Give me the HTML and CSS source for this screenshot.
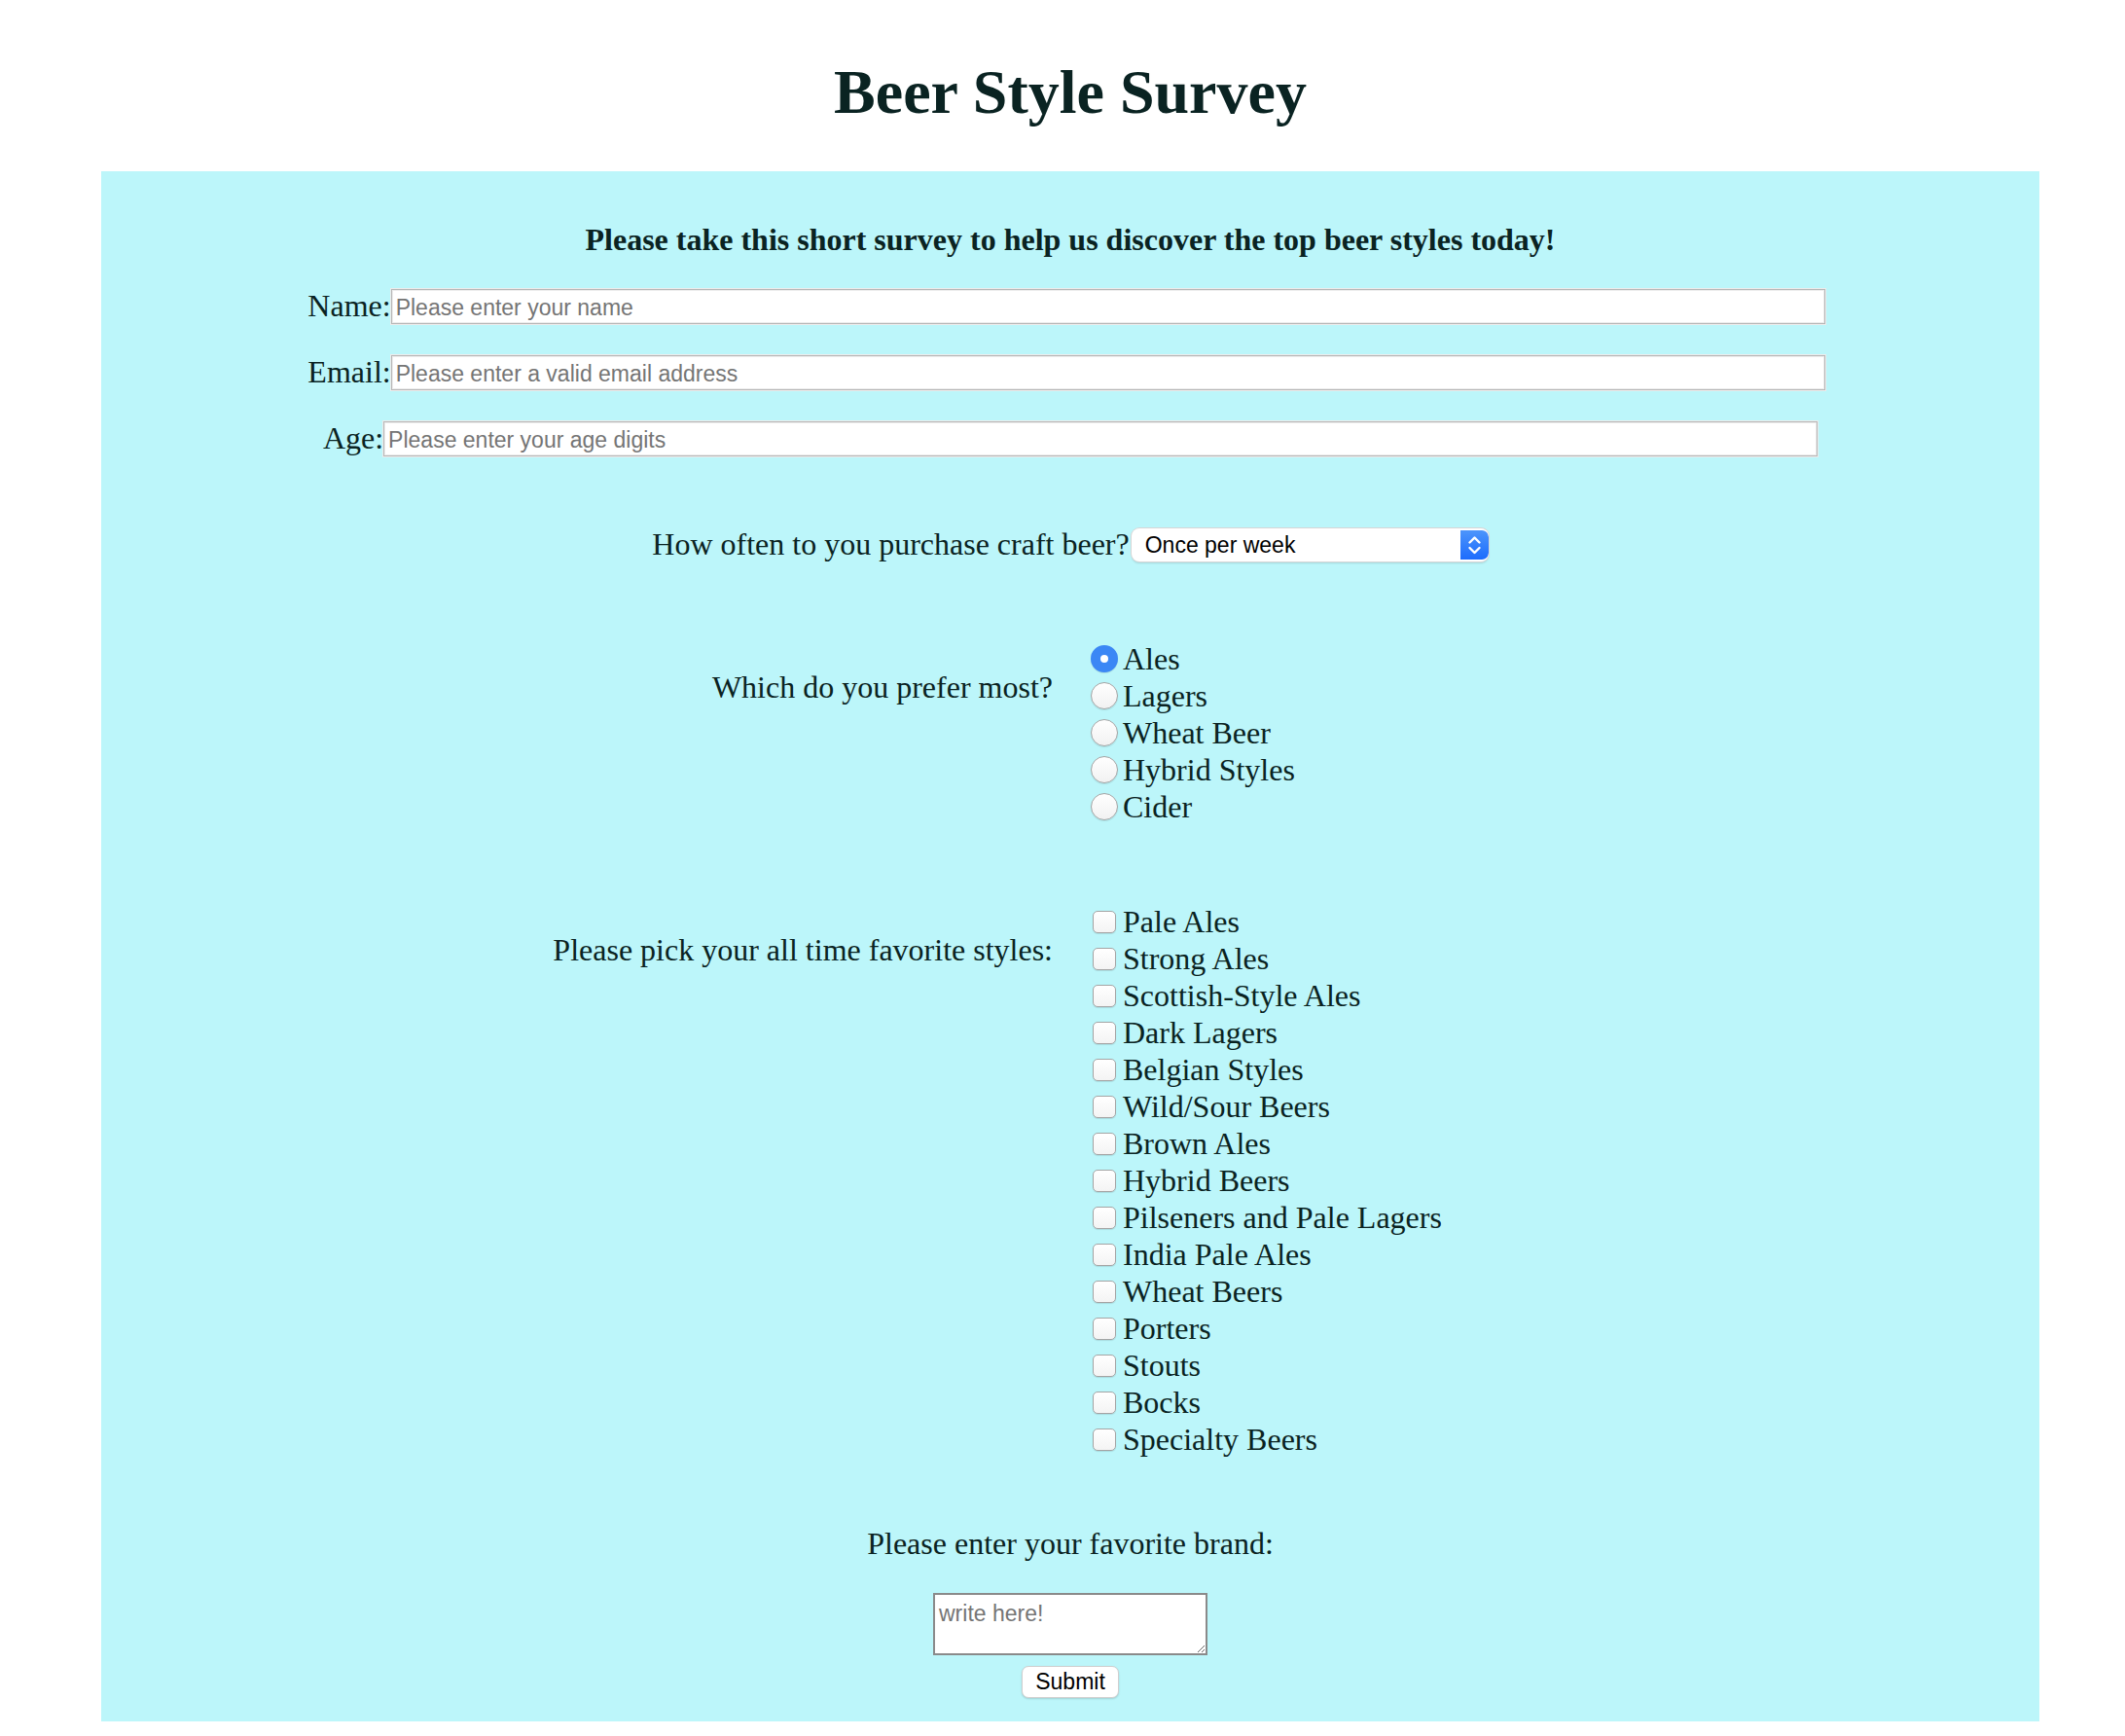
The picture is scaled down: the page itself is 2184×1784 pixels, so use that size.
FILE: index.html
```html
<!DOCTYPE html>
<html lang="en">
<head>
<meta charset="utf-8">
<title>Beer Style Survey</title>
<link rel="stylesheet" href="styles.css">
</head>
<body>
<h1 class="title">Beer Style Survey</h1>
<form class="survey">
  <p class="intro">Please take this short survey to help us discover the top beer styles today!</p>
  <div class="fields">
    <div class="field field-wide"><label class="field-label" for="name">Name:</label><input class="text-input" id="name" type="text" placeholder="Please enter your name"></div>
    <div class="field field-wide"><label class="field-label" for="email">Email:</label><input class="text-input" id="email" type="email" placeholder="Please enter a valid email address"></div>
    <div class="field"><label class="field-label" for="age">Age:</label><input class="text-input" id="age" type="text" placeholder="Please enter your age digits"></div>
  </div>
  <div class="select-row">
    <label class="field-label" for="often">How often to you purchase craft beer?</label>
    <div class="select-wrap">
      <select class="select" id="often">
        <option>Once per week</option>
        <option>Twice per week</option>
        <option>Once per month</option>
      </select>
      <span class="select-btn"><svg width="29" height="30" viewBox="0 0 29 30"><path d="M9.5 12.5 L14.5 7.5 L19.5 12.5" fill="none" stroke="#fff" stroke-width="2.4" stroke-linecap="round" stroke-linejoin="round"/><path d="M9.5 18 L14.5 23 L19.5 18" fill="none" stroke="#fff" stroke-width="2.4" stroke-linecap="round" stroke-linejoin="round"/></svg></span>
    </div>
  </div>
  <div class="question">
    <div class="q-label">Which do you prefer most?</div>
    <div class="options">
      <label class="option"><input class="radio" type="radio" name="pref" checked>Ales</label>
      <label class="option"><input class="radio" type="radio" name="pref">Lagers</label>
      <label class="option"><input class="radio" type="radio" name="pref">Wheat Beer</label>
      <label class="option"><input class="radio" type="radio" name="pref">Hybrid Styles</label>
      <label class="option"><input class="radio" type="radio" name="pref">Cider</label>
    </div>
  </div>
  <div class="question">
    <div class="q-label">Please pick your all time favorite styles:</div>
    <div class="options">
      <label class="option"><input class="check" type="checkbox">Pale Ales</label>
      <label class="option"><input class="check" type="checkbox">Strong Ales</label>
      <label class="option"><input class="check" type="checkbox">Scottish-Style Ales</label>
      <label class="option"><input class="check" type="checkbox">Dark Lagers</label>
      <label class="option"><input class="check" type="checkbox">Belgian Styles</label>
      <label class="option"><input class="check" type="checkbox">Wild/Sour Beers</label>
      <label class="option"><input class="check" type="checkbox">Brown Ales</label>
      <label class="option"><input class="check" type="checkbox">Hybrid Beers</label>
      <label class="option"><input class="check" type="checkbox">Pilseners and Pale Lagers</label>
      <label class="option"><input class="check" type="checkbox">India Pale Ales</label>
      <label class="option"><input class="check" type="checkbox">Wheat Beers</label>
      <label class="option"><input class="check" type="checkbox">Porters</label>
      <label class="option"><input class="check" type="checkbox">Stouts</label>
      <label class="option"><input class="check" type="checkbox">Bocks</label>
      <label class="option"><input class="check" type="checkbox">Specialty Beers</label>
    </div>
  </div>
  <p class="brand-label">Please enter your favorite brand:</p>
  <textarea class="brand" placeholder="write here!"></textarea>
  <button class="submit" type="submit">Submit</button>
</form>
</body>
</html>
```
FILE: styles.css
```css
html, body {
  background: #ffffff;
}
body {
  margin: 0 0 0 16px;
  font-family: "Liberation Serif", "Times New Roman", serif;
  font-size: 32px;
  color: #0a2322;
}
.title {
  margin: 58px 0 44px;
  font-size: 64px;
  line-height: 74px;
  font-weight: bold;
  text-align: center;
}
.survey {
  margin: 0 88px;
  padding: 52px 0 24px;
  background: #bcf6fa;
  display: flex;
  flex-direction: column;
  align-items: stretch;
}
.intro {
  margin: 0 0 31px;
  font-weight: bold;
  line-height: 37px;
  text-align: center;
}
.fields {
  display: flex;
  flex-direction: column;
  gap: 31px;
  margin-bottom: 72px;
}
.field {
  display: flex;
  justify-content: center;
  align-items: center;
  height: 37px;
}
.field-wide {
  padding-right: 8px;
}
.field-label {
  line-height: 37px;
}
.text-input {
  box-sizing: border-box;
  width: 1474px;
  height: 36px;
  margin: 0;
  padding: 3px 4px 0;
  font-family: "Liberation Sans", Arial, sans-serif;
  font-size: 23px;
  color: #000;
  background: #fff;
  border: 1px solid #b8b8b8;
  box-shadow: 0 0 0 1px #ececec, inset 0 0 0 1px #ececec;
  outline: none;
}
.text-input::placeholder {
  color: #757575;
}
.select-row {
  display: flex;
  justify-content: center;
  align-items: center;
  gap: 2px;
  height: 37px;
}
.select-wrap {
  display: flex;
  box-sizing: border-box;
  width: 367px;
  height: 34px;
  background: #fff;
  border-radius: 8px;
  box-shadow: 0 0 0 1px #d6d6d6, 0 2px 2px rgba(0, 0, 0, 0.12);
  overflow: hidden;
}
.select {
  flex: 1;
  appearance: none;
  -webkit-appearance: none;
  border: none;
  background: transparent;
  margin: 0;
  padding: 0 0 0 14px;
  font-family: "Liberation Sans", Arial, sans-serif;
  font-size: 23px;
  color: #000;
  outline: none;
}
.select-btn {
  display: flex;
  align-items: center;
  justify-content: center;
  width: 29px;
  margin: 2px 0;
  border-radius: 0 7px 7px 0;
  background: linear-gradient(#4d95fb, #1c6cfd);
}
.select-btn svg {
  display: block;
}
.question {
  display: grid;
  grid-template-columns: 1fr 1fr;
  margin-top: 80px;
}
.q-label {
  padding: 30px 18px 0 0;
  line-height: 37px;
  text-align: right;
}
.options {
  display: flex;
  flex-direction: column;
  padding-left: 21px;
}
.option {
  display: flex;
  align-items: center;
  height: 38px;
  line-height: 37px;
}
.radio {
  appearance: none;
  -webkit-appearance: none;
  box-sizing: border-box;
  width: 28px;
  height: 28px;
  margin: 0 5px 0 0;
  border-radius: 50%;
  border: 1px solid #a4a4a4;
  background: linear-gradient(#ffffff, #f2f2f2);
  box-shadow: 0 1px 1px rgba(0, 0, 0, 0.1);
}
.radio:checked {
  border: 10px solid #3b87f5;
  background: #ffffff;
}
.check {
  appearance: none;
  -webkit-appearance: none;
  box-sizing: border-box;
  width: 24px;
  height: 23px;
  margin: 0 7px 0 2px;
  border-radius: 5px;
  border: 1px solid #a4a4a4;
  background: linear-gradient(#ffffff, #f4f4f4);
  box-shadow: 0 1px 1px rgba(0, 0, 0, 0.1);
}
.brand-label {
  margin: 70px 0 0;
  line-height: 37px;
  text-align: center;
}
.brand {
  box-sizing: border-box;
  align-self: center;
  width: 282px;
  height: 64px;
  margin: 32px 0 0;
  padding: 6px 4px 3px;
  font-family: "Liberation Sans", Arial, sans-serif;
  font-size: 23px;
  background: #fff;
  border: 2px solid #8a8a8a;
  resize: both;
  outline: none;
}
.brand::placeholder {
  color: #757575;
}
.submit {
  align-self: center;
  box-sizing: border-box;
  width: 100px;
  height: 33px;
  margin: 11px 0 0;
  padding: 0;
  font-family: "Liberation Sans", Arial, sans-serif;
  font-size: 23px;
  color: #000;
  background: #fff;
  border: 1px solid #cfcfcf;
  border-radius: 7px;
  box-shadow: 0 1px 2px rgba(0, 0, 0, 0.15);
}
```
